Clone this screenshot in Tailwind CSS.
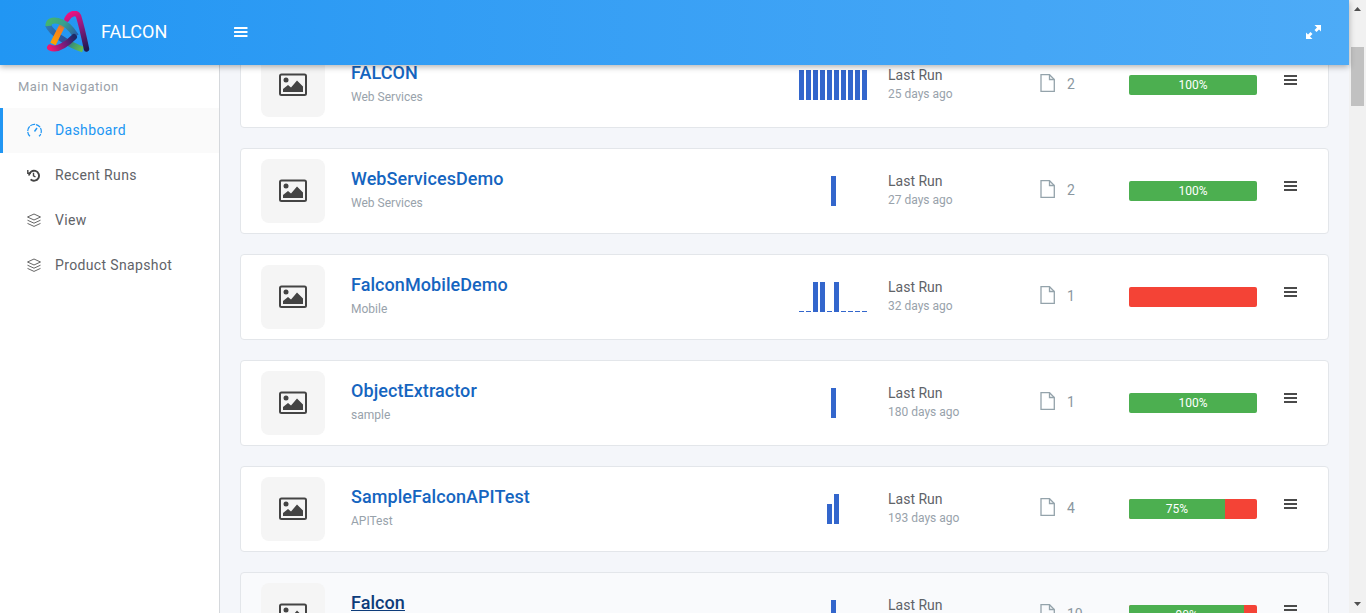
<!DOCTYPE html>
<html lang="en">

<head>
    <meta charset="UTF-8">
    <meta name="viewport" content="width=device-width, initial-scale=1.0">
    <title>Falcon Dashboard</title>
    <script src="https://cdn.jsdelivr.net/npm/@tailwindcss/browser@4"></script>
</head>

<body class="flex h-screen overflow-hidden bg-white font-['Roboto',sans-serif]">

    <div class="flex flex-col w-[1349px] h-full">
        <!-- top bar -->
        <header class="relative z-10 flex items-center h-[65px] shrink-0 bg-linear-to-r from-[#2196f3] to-[#4dabf7] shadow-[0_2px_6px_rgba(0,0,0,0.3)]">
            <svg class="ml-[45px] w-[47px] h-[43px]" viewBox="0 0 47 43" fill="none">
                <defs>
                    <linearGradient id="g1" gradientUnits="userSpaceOnUse" x1="3" y1="10" x2="31" y2="27"><stop offset="0" stop-color="#45b56e"/><stop offset="0.45" stop-color="#37a08f"/><stop offset="1" stop-color="#2a5aa5"/></linearGradient>
                    <linearGradient id="g2" gradientUnits="userSpaceOnUse" x1="22" y1="3" x2="41" y2="38"><stop offset="0" stop-color="#ee1280"/><stop offset="0.45" stop-color="#8a1a80"/><stop offset="1" stop-color="#1f1a50"/></linearGradient>
                    <linearGradient id="g3" gradientUnits="userSpaceOnUse" x1="5" y1="37" x2="29" y2="26"><stop offset="0" stop-color="#ee1870"/><stop offset="0.55" stop-color="#7a1a7a"/><stop offset="1" stop-color="#1d2a66"/></linearGradient>
                    <linearGradient id="g4" gradientUnits="userSpaceOnUse" x1="8" y1="33" x2="20" y2="11"><stop offset="0" stop-color="#ffa000"/><stop offset="0.7" stop-color="#f57c20"/><stop offset="1" stop-color="#3b78b8"/></linearGradient>
                    <linearGradient id="g5" gradientUnits="userSpaceOnUse" x1="3" y1="14" x2="39" y2="38"><stop offset="0" stop-color="#2f7ab5"/><stop offset="0.5" stop-color="#2a4f9a"/><stop offset="0.75" stop-color="#3f9a70"/><stop offset="1" stop-color="#6cc24a"/></linearGradient>
                </defs>
                <path d="M3 14C6 22 24 34 38 38.500" stroke="url(#g5)" stroke-width="6"/>
                <path d="M22 8C25 2.500 31 0.500 33.500 5C36 13 39 26 41.500 38" stroke="url(#g2)" stroke-width="5.500" stroke-linecap="round"/>
                <path d="M8 33C11 27 15 18 20 10" stroke="url(#g4)" stroke-width="6"/>
                <path d="M3.500 15C3 6 20 7 31 25" stroke="url(#g1)" stroke-width="6"/>
                <path d="M5 36.500C12 40 22 33 29 26" stroke="url(#g3)" stroke-width="6" stroke-linecap="round"/>
            </svg>
            <span class="ml-[9px] w-[67px] -mt-[2px] text-[18px] text-white">FALCON</span>
            <svg class="ml-[66px] -mt-[2px] w-[14px] h-[12px] text-white" viewBox="0 0 14 12" fill="currentColor">
                <rect y="1" width="13.500" height="2" rx="0.500"/><rect y="5" width="13.500" height="2" rx="0.500"/><rect y="9" width="13.500" height="2" rx="0.500"/>
            </svg>
            <svg class="ml-auto mr-[28px] -mt-px w-[15px] h-[14px] text-white" viewBox="0 0 15 14" fill="currentColor">
                <path d="M8.500 0H15v6.500l-2-2-2.500 2.500-2-2L11 2.500z"/>
                <path d="M6.500 14H0V7.500l2 2L4.500 7l2 2L4 11.500z"/>
            </svg>
        </header>

        <div class="flex flex-1 min-h-0">
            <!-- sidebar -->
            <nav class="w-[220px] shrink-0 bg-white border-r border-[#d5d8dc]">
                <p class="h-[43px] pl-[18px] pt-[14px] text-[13px] leading-[16px] tracking-[0.44px] text-[#9aa1a9]">Main Navigation</p>
                <a class="flex items-center h-[45px] pl-[24px] bg-[#fafafa] border-l-[3px] border-[#2196f3] text-[14px] tracking-[0.36px] text-[#2196f3]">
                    <svg class="w-[15px] h-[15px] mr-[13px]" viewBox="0 0 15 15" fill="none" stroke="currentColor" stroke-width="1.200">
                        <path d="M3 13.300A6.800 6.800 0 1 1 12 13.300" stroke-dasharray="5 0.800"/><path d="M7.500 8.500l2.500-3.500" stroke-width="1.400"/>
                    </svg>
                    Dashboard
                </a>
                <a class="flex items-center h-[45px] pl-[27px] text-[14px] tracking-[0.36px] text-[#5f6368]">
                    <svg class="w-[13px] h-[13px] mr-[15px] text-[#444]" viewBox="0 0 13 13" fill="none" stroke="currentColor" stroke-width="1.900">
                        <path d="M2 6.500a5 5 0 1 1 1.600 3.900"/><path d="M6.500 3.800v3l2 1.200" stroke-width="1.400"/><path d="M0.800 1v3.200h3.200" stroke-width="1.400"/>
                    </svg>
                    Recent Runs
                </a>
                <a class="flex items-center h-[45px] pl-[26px] text-[14px] tracking-[0.36px] text-[#5f6368]">
                    <svg class="w-[16px] h-[15px] mr-[13px]" viewBox="0 0 16 15" fill="none" stroke="#666" stroke-width="1">
                        <path d="M8 1l6.500 3L8 7 1.500 4z"/><path d="M1.500 7.200L8 10.200l6.500-3"/><path d="M1.500 10.400L8 13.400l6.500-3"/>
                    </svg>
                    View
                </a>
                <a class="flex items-center h-[45px] pl-[26px] text-[14px] tracking-[0.36px] text-[#5f6368]">
                    <svg class="w-[16px] h-[15px] mr-[13px]" viewBox="0 0 16 15" fill="none" stroke="#666" stroke-width="1">
                        <path d="M8 1l6.500 3L8 7 1.500 4z"/><path d="M1.500 7.200L8 10.200l6.500-3"/><path d="M1.500 10.400L8 13.400l6.500-3"/>
                    </svg>
                    Product Snapshot
                </a>
            </nav>

            <!-- project list, scrolled by 23px under the top bar -->
            <main class="flex-1 min-w-0 overflow-hidden bg-[#f4f6fa] px-5">
                <div class="flex flex-col gap-5 -mt-[23px]">

                    <div class="flex h-[86px] shrink-0 rounded border border-[#e3e6ea] bg-white pl-5">
                        <div class="flex items-center justify-center w-16 h-16 mt-[10px] rounded-lg bg-[#f5f5f5]">
                            <svg class="w-7 h-6" viewBox="0 0 28 24"><rect x="1" y="1.500" width="26" height="20.500" rx="1.500" fill="none" stroke="#444" stroke-width="2"/><circle cx="7" cy="7" r="2.500" fill="#444"/><path d="M4 19v-3l5-4 3 2.500 6-7 6 6v5.500z" fill="#444"/></svg>
                        </div>
                        <div class="w-[448px] ml-[26px] mt-[18px]">
                            <p class="text-[18px] leading-[24px] font-medium tracking-[0.07px] text-[#1565c0]">FALCON</p>
                            <p class="mt-[4px] text-[12px] leading-[16px] text-[#98a2ab]">Web Services</p>
                        </div>
                        <div class="flex items-end justify-center gap-[2px] w-[68px] h-[30px] mt-[27px]">
                            <i class="w-[5px] h-[30px] bg-[#3366cc]"></i><i class="w-[5px] h-[30px] bg-[#3366cc]"></i><i class="w-[5px] h-[30px] bg-[#3366cc]"></i><i class="w-[5px] h-[30px] bg-[#3366cc]"></i><i class="w-[5px] h-[30px] bg-[#3366cc]"></i><i class="w-[5px] h-[30px] bg-[#3366cc]"></i><i class="w-[5px] h-[30px] bg-[#3366cc]"></i><i class="w-[5px] h-[30px] bg-[#3366cc]"></i><i class="w-[5px] h-[30px] bg-[#3366cc]"></i><i class="w-[5px] h-[30px] bg-[#3366cc]"></i>
                        </div>
                        <div class="w-[152px] ml-[21px] mt-[23px]">
                            <p class="text-[14px] leading-[19px] text-[#5f6368]">Last Run</p>
                            <p class="text-[12px] leading-[19px] text-[#98a2ab]">25 days ago</p>
                        </div>
                        <svg class="w-[15px] h-[18px] mt-[31px] mr-[12px]" viewBox="0 0 15 18" fill="none" stroke="#94a3ab" stroke-width="1.300"><path d="M1 0.700h8.500L14.300 5.500V17.300H1z"/><path d="M9.500 0.700v4.800h4.800"/></svg>
                        <p class="w-[62px] mt-[32px] text-[14px] leading-[18px] text-[#8a97a0]">2</p>
                        <div class="flex w-[128px] h-5 mt-[32px] rounded-[2px] overflow-hidden bg-[#f44336] text-[12px] leading-[20px] text-white text-center">
                            <div class="w-full bg-[#4caf50]">100%</div>
                        </div>
                        <svg class="w-[13px] h-[11px] ml-[27px] mt-[32px]" viewBox="0 0 13 11" fill="#4a4a4a"><rect y="0" width="13" height="2"/><rect y="4" width="13" height="2"/><rect y="8" width="13" height="2"/></svg>
                    </div>

                    <div class="flex h-[86px] shrink-0 rounded border border-[#e3e6ea] bg-white pl-5">
                        <div class="flex items-center justify-center w-16 h-16 mt-[10px] rounded-lg bg-[#f5f5f5]">
                            <svg class="w-7 h-6" viewBox="0 0 28 24"><rect x="1" y="1.500" width="26" height="20.500" rx="1.500" fill="none" stroke="#444" stroke-width="2"/><circle cx="7" cy="7" r="2.500" fill="#444"/><path d="M4 19v-3l5-4 3 2.500 6-7 6 6v5.500z" fill="#444"/></svg>
                        </div>
                        <div class="w-[448px] ml-[26px] mt-[18px]">
                            <p class="text-[18px] leading-[24px] font-medium tracking-[0.07px] text-[#1565c0]">WebServicesDemo</p>
                            <p class="mt-[4px] text-[12px] leading-[16px] text-[#98a2ab]">Web Services</p>
                        </div>
                        <div class="flex items-end justify-center gap-[2px] w-[68px] h-[30px] mt-[27px]">
                            <i class="w-[5px] h-[30px] bg-[#3366cc]"></i>
                        </div>
                        <div class="w-[152px] ml-[21px] mt-[23px]">
                            <p class="text-[14px] leading-[19px] text-[#5f6368]">Last Run</p>
                            <p class="text-[12px] leading-[19px] text-[#98a2ab]">27 days ago</p>
                        </div>
                        <svg class="w-[15px] h-[18px] mt-[31px] mr-[12px]" viewBox="0 0 15 18" fill="none" stroke="#94a3ab" stroke-width="1.300"><path d="M1 0.700h8.500L14.300 5.500V17.300H1z"/><path d="M9.500 0.700v4.800h4.800"/></svg>
                        <p class="w-[62px] mt-[32px] text-[14px] leading-[18px] text-[#8a97a0]">2</p>
                        <div class="flex w-[128px] h-5 mt-[32px] rounded-[2px] overflow-hidden bg-[#f44336] text-[12px] leading-[20px] text-white text-center">
                            <div class="w-full bg-[#4caf50]">100%</div>
                        </div>
                        <svg class="w-[13px] h-[11px] ml-[27px] mt-[32px]" viewBox="0 0 13 11" fill="#4a4a4a"><rect y="0" width="13" height="2"/><rect y="4" width="13" height="2"/><rect y="8" width="13" height="2"/></svg>
                    </div>

                    <div class="flex h-[86px] shrink-0 rounded border border-[#e3e6ea] bg-white pl-5">
                        <div class="flex items-center justify-center w-16 h-16 mt-[10px] rounded-lg bg-[#f5f5f5]">
                            <svg class="w-7 h-6" viewBox="0 0 28 24"><rect x="1" y="1.500" width="26" height="20.500" rx="1.500" fill="none" stroke="#444" stroke-width="2"/><circle cx="7" cy="7" r="2.500" fill="#444"/><path d="M4 19v-3l5-4 3 2.500 6-7 6 6v5.500z" fill="#444"/></svg>
                        </div>
                        <div class="w-[448px] ml-[26px] mt-[18px]">
                            <p class="text-[18px] leading-[24px] font-medium tracking-[0.07px] text-[#1565c0]">FalconMobileDemo</p>
                            <p class="mt-[4px] text-[12px] leading-[16px] text-[#98a2ab]">Mobile</p>
                        </div>
                        <div class="flex items-end justify-center gap-[2px] w-[68px] h-[30px] mt-[27px]">
                            <i class="w-[5px] h-px bg-[#3366cc]"></i><i class="w-[5px] h-px bg-[#3366cc]"></i><i class="w-[5px] h-[30px] bg-[#3366cc]"></i><i class="w-[5px] h-[30px] bg-[#3366cc]"></i><i class="w-[5px] h-px bg-[#3366cc]"></i><i class="w-[5px] h-[30px] bg-[#3366cc]"></i><i class="w-[5px] h-px bg-[#3366cc]"></i><i class="w-[5px] h-px bg-[#3366cc]"></i><i class="w-[5px] h-px bg-[#3366cc]"></i><i class="w-[5px] h-px bg-[#3366cc]"></i>
                        </div>
                        <div class="w-[152px] ml-[21px] mt-[23px]">
                            <p class="text-[14px] leading-[19px] text-[#5f6368]">Last Run</p>
                            <p class="text-[12px] leading-[19px] text-[#98a2ab]">32 days ago</p>
                        </div>
                        <svg class="w-[15px] h-[18px] mt-[31px] mr-[12px]" viewBox="0 0 15 18" fill="none" stroke="#94a3ab" stroke-width="1.300"><path d="M1 0.700h8.500L14.300 5.500V17.300H1z"/><path d="M9.500 0.700v4.800h4.800"/></svg>
                        <p class="w-[62px] mt-[32px] text-[14px] leading-[18px] text-[#8a97a0]">1</p>
                        <div class="flex w-[128px] h-5 mt-[32px] rounded-[2px] overflow-hidden bg-[#f44336] text-[12px] leading-[20px] text-white text-center"></div>
                        <svg class="w-[13px] h-[11px] ml-[27px] mt-[32px]" viewBox="0 0 13 11" fill="#4a4a4a"><rect y="0" width="13" height="2"/><rect y="4" width="13" height="2"/><rect y="8" width="13" height="2"/></svg>
                    </div>

                    <div class="flex h-[86px] shrink-0 rounded border border-[#e3e6ea] bg-white pl-5">
                        <div class="flex items-center justify-center w-16 h-16 mt-[10px] rounded-lg bg-[#f5f5f5]">
                            <svg class="w-7 h-6" viewBox="0 0 28 24"><rect x="1" y="1.500" width="26" height="20.500" rx="1.500" fill="none" stroke="#444" stroke-width="2"/><circle cx="7" cy="7" r="2.500" fill="#444"/><path d="M4 19v-3l5-4 3 2.500 6-7 6 6v5.500z" fill="#444"/></svg>
                        </div>
                        <div class="w-[448px] ml-[26px] mt-[18px]">
                            <p class="text-[18px] leading-[24px] font-medium tracking-[0.07px] text-[#1565c0]">ObjectExtractor</p>
                            <p class="mt-[4px] text-[12px] leading-[16px] text-[#98a2ab]">sample</p>
                        </div>
                        <div class="flex items-end justify-center gap-[2px] w-[68px] h-[30px] mt-[27px]">
                            <i class="w-[5px] h-[30px] bg-[#3366cc]"></i>
                        </div>
                        <div class="w-[152px] ml-[21px] mt-[23px]">
                            <p class="text-[14px] leading-[19px] text-[#5f6368]">Last Run</p>
                            <p class="text-[12px] leading-[19px] text-[#98a2ab]">180 days ago</p>
                        </div>
                        <svg class="w-[15px] h-[18px] mt-[31px] mr-[12px]" viewBox="0 0 15 18" fill="none" stroke="#94a3ab" stroke-width="1.300"><path d="M1 0.700h8.500L14.300 5.500V17.300H1z"/><path d="M9.500 0.700v4.800h4.800"/></svg>
                        <p class="w-[62px] mt-[32px] text-[14px] leading-[18px] text-[#8a97a0]">1</p>
                        <div class="flex w-[128px] h-5 mt-[32px] rounded-[2px] overflow-hidden bg-[#f44336] text-[12px] leading-[20px] text-white text-center">
                            <div class="w-full bg-[#4caf50]">100%</div>
                        </div>
                        <svg class="w-[13px] h-[11px] ml-[27px] mt-[32px]" viewBox="0 0 13 11" fill="#4a4a4a"><rect y="0" width="13" height="2"/><rect y="4" width="13" height="2"/><rect y="8" width="13" height="2"/></svg>
                    </div>

                    <div class="flex h-[86px] shrink-0 rounded border border-[#e3e6ea] bg-white pl-5">
                        <div class="flex items-center justify-center w-16 h-16 mt-[10px] rounded-lg bg-[#f5f5f5]">
                            <svg class="w-7 h-6" viewBox="0 0 28 24"><rect x="1" y="1.500" width="26" height="20.500" rx="1.500" fill="none" stroke="#444" stroke-width="2"/><circle cx="7" cy="7" r="2.500" fill="#444"/><path d="M4 19v-3l5-4 3 2.500 6-7 6 6v5.500z" fill="#444"/></svg>
                        </div>
                        <div class="w-[448px] ml-[26px] mt-[18px]">
                            <p class="text-[18px] leading-[24px] font-medium tracking-[0.07px] text-[#1565c0]">SampleFalconAPITest</p>
                            <p class="mt-[4px] text-[12px] leading-[16px] text-[#98a2ab]">APITest</p>
                        </div>
                        <div class="flex items-end justify-center gap-[2px] w-[68px] h-[30px] mt-[27px]">
                            <i class="w-[5px] h-[20px] bg-[#3366cc]"></i><i class="w-[5px] h-[30px] bg-[#3366cc]"></i>
                        </div>
                        <div class="w-[152px] ml-[21px] mt-[23px]">
                            <p class="text-[14px] leading-[19px] text-[#5f6368]">Last Run</p>
                            <p class="text-[12px] leading-[19px] text-[#98a2ab]">193 days ago</p>
                        </div>
                        <svg class="w-[15px] h-[18px] mt-[31px] mr-[12px]" viewBox="0 0 15 18" fill="none" stroke="#94a3ab" stroke-width="1.300"><path d="M1 0.700h8.500L14.300 5.500V17.300H1z"/><path d="M9.500 0.700v4.800h4.800"/></svg>
                        <p class="w-[62px] mt-[32px] text-[14px] leading-[18px] text-[#8a97a0]">4</p>
                        <div class="flex w-[128px] h-5 mt-[32px] rounded-[2px] overflow-hidden bg-[#f44336] text-[12px] leading-[20px] text-white text-center">
                            <div class="w-[75%] bg-[#4caf50]">75%</div>
                        </div>
                        <svg class="w-[13px] h-[11px] ml-[27px] mt-[32px]" viewBox="0 0 13 11" fill="#4a4a4a"><rect y="0" width="13" height="2"/><rect y="4" width="13" height="2"/><rect y="8" width="13" height="2"/></svg>
                    </div>

                    <div class="flex h-[86px] shrink-0 rounded border border-[#e3e6ea] bg-[#f9fafc] pl-5">
                        <div class="flex items-center justify-center w-16 h-16 mt-[10px] rounded-lg bg-[#f5f5f5]">
                            <svg class="w-7 h-6" viewBox="0 0 28 24"><rect x="1" y="1.500" width="26" height="20.500" rx="1.500" fill="none" stroke="#444" stroke-width="2"/><circle cx="7" cy="7" r="2.500" fill="#444"/><path d="M4 19v-3l5-4 3 2.500 6-7 6 6v5.500z" fill="#444"/></svg>
                        </div>
                        <div class="w-[448px] ml-[26px] mt-[18px]">
                            <p class="text-[18px] leading-[24px] font-medium tracking-[0.07px] text-[#0d3c7a] underline">Falcon</p>
                            <p class="mt-[4px] text-[12px] leading-[16px] text-[#98a2ab]">Web Services</p>
                        </div>
                        <div class="flex items-end justify-center gap-[2px] w-[68px] h-[30px] mt-[27px]">
                            <i class="w-[5px] h-[30px] bg-[#3366cc]"></i>
                        </div>
                        <div class="w-[152px] ml-[21px] mt-[23px]">
                            <p class="text-[14px] leading-[19px] text-[#5f6368]">Last Run</p>
                            <p class="text-[12px] leading-[19px] text-[#98a2ab]">200 days ago</p>
                        </div>
                        <svg class="w-[15px] h-[18px] mt-[31px] mr-[12px]" viewBox="0 0 15 18" fill="none" stroke="#94a3ab" stroke-width="1.300"><path d="M1 0.700h8.500L14.300 5.500V17.300H1z"/><path d="M9.500 0.700v4.800h4.800"/></svg>
                        <p class="w-[62px] mt-[32px] text-[14px] leading-[18px] text-[#8a97a0]">10</p>
                        <div class="flex w-[128px] h-5 mt-[32px] rounded-[2px] overflow-hidden bg-[#f44336] text-[12px] leading-[20px] text-white text-center">
                            <div class="w-[90%] bg-[#4caf50]">90%</div>
                        </div>
                        <svg class="w-[13px] h-[11px] ml-[27px] mt-[32px]" viewBox="0 0 13 11" fill="#4a4a4a"><rect y="0" width="13" height="2"/><rect y="4" width="13" height="2"/><rect y="8" width="13" height="2"/></svg>
                    </div>

                </div>
            </main>
        </div>
    </div>

    <!-- page scrollbar -->
    <div class="flex flex-col items-center w-[17px] h-full shrink-0 bg-[#f1f1f1]">
        <svg class="w-[17px] h-[17px] shrink-0" viewBox="0 0 17 17" fill="#505050"><path d="M5 11l3.500-4 3.500 4z"/></svg>
        <div class="w-[13px] h-[59px] mt-[30px] bg-[#c1c1c1]"></div>
        <svg class="w-[17px] h-[17px] mt-auto shrink-0" viewBox="0 0 17 17" fill="#505050"><path d="M5 6l3.500 4 3.500-4z"/></svg>
    </div>

</body>

</html>
